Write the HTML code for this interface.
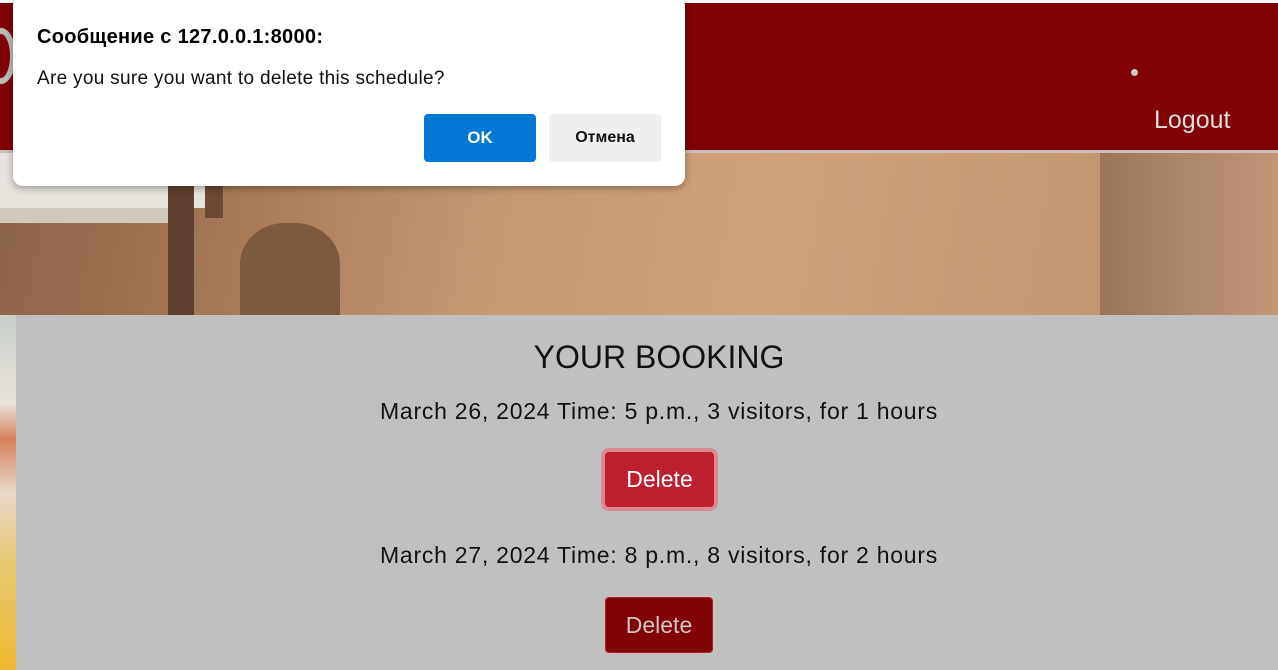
<!DOCTYPE html>
<html><head><meta charset="utf-8"><style>
*{margin:0;padding:0;box-sizing:border-box}
body{width:1278px;height:670px;overflow:hidden;background:#c0c0c0;position:relative;font-family:"Liberation Sans",sans-serif}
.top{position:absolute;left:0;top:0;width:1278px;height:3px;background:#fff}
.hdr{position:absolute;left:0;top:3px;width:1278px;height:147px;background:#800308}
.line{position:absolute;left:0;top:150px;width:1278px;height:3px;background:#c8c0bc}
.img{position:absolute;left:0;top:153px;width:1278px;height:162px;overflow:hidden;background:linear-gradient(100deg,#8c6448 0%,#a87a58 20%,#c99a72 40%,#cfa27a 60%,#c69a72 80%,#b88a66 100%)}
.side{position:absolute;left:0;top:315px;width:16px;height:355px;background:linear-gradient(180deg,#c8d0cc 0%,#e8e2d8 25%,#d8805a 35%,#e8d8c8 50%,#e8c870 70%,#f0b830 100%)}
h1{position:absolute;left:0;width:1318px;top:339px;text-align:center;font-weight:normal;font-size:32px;color:#111}
.t{position:absolute;left:0;width:1318px;text-align:center;font-size:23px;letter-spacing:0.75px;color:#111}
.btn{position:absolute;color:#fff;font-size:23px;text-align:center;border-radius:4px}
.dlg{position:absolute;left:13px;top:-4px;width:672px;height:190px;background:#fff;border-radius:10px;box-shadow:0 2px 8px rgba(0,0,0,.35)}
</style></head><body>
<div class="top"></div>
<div class="hdr"></div>
<div style="position:absolute;left:1131px;top:69px;width:7px;height:7px;border-radius:50%;background:#ccc"></div>
<div style="position:absolute;left:1154px;top:106px;font-size:25px;color:#ddd">Logout</div>
<div style="position:absolute;left:-14px;top:28px;width:30px;height:56px;border:6px solid #bbb;border-radius:50%"></div>
<div class="line"></div>
<div class="img">
<div style="position:absolute;left:0;top:0;width:220px;height:55px;background:#e6e3dc"></div>
<div style="position:absolute;left:0;top:55px;width:170px;height:15px;background:#cfc8bc"></div>
<div style="position:absolute;left:168px;top:0;width:26px;height:162px;background:#5e4030"></div>
<div style="position:absolute;left:205px;top:0;width:18px;height:65px;background:#6a4a36"></div>
<div style="position:absolute;left:240px;top:70px;width:100px;height:92px;background:#7c5a40;border-radius:45% 45% 0 0"></div>
<div style="position:absolute;left:1100px;top:0;width:178px;height:162px;background:linear-gradient(90deg,#9c7458,#c09878)"></div>
</div>
<div class="side"></div>
<h1>YOUR BOOKING</h1>
<div class="t" style="top:398px">March 26, 2024 Time: 5 p.m., 3 visitors, for 1 hours</div>
<div class="btn" style="left:601px;top:448px;width:117px;height:63px;background:#d98a94;border-radius:8px"></div>
<div class="btn" style="left:605px;top:452px;width:109px;height:55px;background:#bd1f2f;line-height:55px">Delete</div>
<div class="t" style="top:542px">March 27, 2024 Time: 8 p.m., 8 visitors, for 2 hours</div>
<div class="btn" style="left:605px;top:597px;width:108px;height:56px;background:#800308;border:1px solid #c01828;line-height:54px;color:#d0c4c4">Delete</div>
<div class="dlg">
<div style="position:absolute;left:24px;top:30px;font-size:20px;letter-spacing:0.3px;font-weight:bold;color:#000">Сообщение с 127.0.0.1:8000:</div>
<div style="position:absolute;left:24px;top:72px;font-size:19px;letter-spacing:0.3px;color:#111">Are you sure you want to delete this schedule?</div>
<div style="position:absolute;left:411px;top:118px;width:112px;height:48px;background:#0078d4;border-radius:4px;color:#fff;font-size:17px;font-weight:bold;text-align:center;line-height:48px">OK</div>
<div style="position:absolute;left:536px;top:118px;width:112px;height:48px;background:#efefef;border-radius:4px;color:#111;font-size:16px;font-weight:bold;text-align:center;line-height:48px">Отмена</div>
</div>
</body></html>
